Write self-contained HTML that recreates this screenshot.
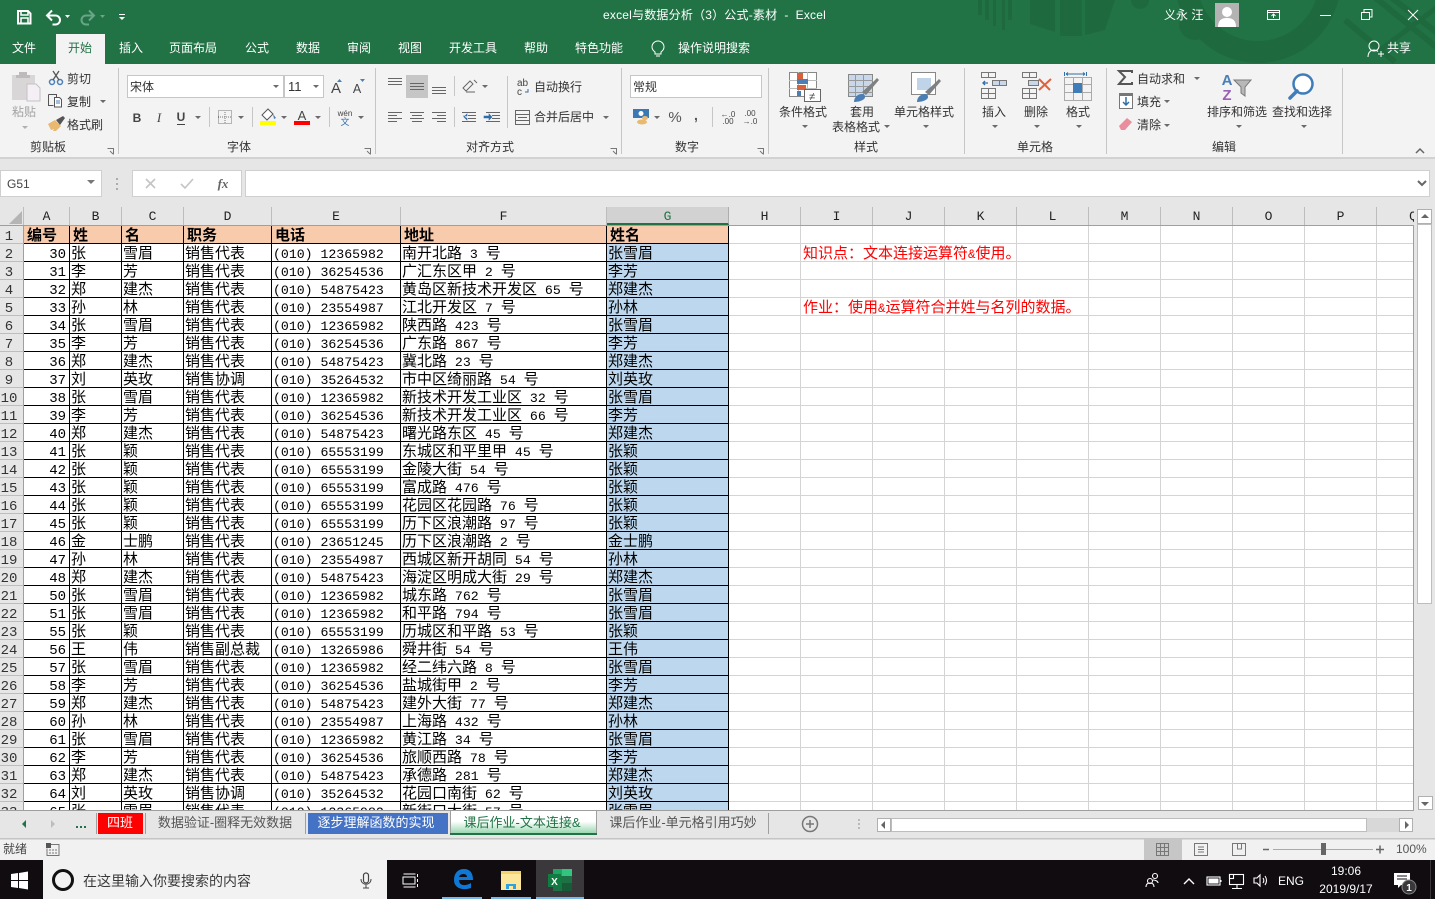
<!DOCTYPE html>
<html lang="zh"><head><meta charset="utf-8"><title>Excel</title>
<style>
html,body{margin:0;padding:0;width:1435px;height:899px;overflow:hidden;background:#e6e6e6}
svg.c{position:absolute;left:0;top:0}
svg.c text{font-family:"Liberation Sans","Noto Sans CJK SC",sans-serif;font-size:12px;fill:#333;white-space:pre}
svg.c .m{text-anchor:middle}
svg.c .w{fill:#fff}
#g{position:absolute;left:729px;top:226px;width:685px;height:584px;background-color:#fff;background-image:linear-gradient(to right,transparent 71px,#d4d4d4 71px),linear-gradient(to bottom,transparent 17px,#d4d4d4 17px);background-size:72px 18px;border-right:1px solid #9f9f9f;box-sizing:border-box}
#h{position:absolute;left:0;top:207px;width:1414px;height:19px;background:#e6e6e6;border-bottom:1px solid #9f9f9f;box-sizing:border-box;overflow:hidden}
#h b{position:absolute;top:0;height:18px;font:13px/20px "Liberation Mono",monospace;color:#222;text-align:center;border-right:1px solid #bdbdbd;box-sizing:border-box}
#h b.s{background:#d2d2d2;color:#217346;border-bottom:2px solid #217346;border-right:1px solid #adadad}
#tw{position:absolute;left:0;top:226px;width:729px;height:584px;overflow:hidden;background:#fff}
table{border-collapse:separate;border-spacing:0;table-layout:fixed;width:729px;font:15px/17px "WenQuanYi Zen Hei","Noto Sans CJK SC",sans-serif;color:#000}
tr{height:18px}
td,th{box-sizing:border-box;height:18px;padding:0 0 0 1px;white-space:pre;overflow:hidden;font-weight:normal;text-align:left;border-right:1px solid #000;border-bottom:1px solid #000;vertical-align:top}
th{background:#e6e6e6;border-right:1px solid #9f9f9f;border-bottom:1px solid #bdbdbd;text-align:center;font:14px/12px "Liberation Mono",monospace;color:#333;padding:5px 5px 0 0}
td:nth-child(2){text-align:right;padding:5px 3px 0 0;font:14px/12px "Liberation Mono",monospace}
i{font:normal 13.2px/0 "Liberation Mono",monospace}
tr.f td{background:#f8cbad;padding:0 0 0 3px;text-align:left;font:bold 15px/17px "WenQuanYi Zen Hei","Noto Sans CJK SC",sans-serif}
.n{position:absolute;left:803px;color:#f00;font:15px/18px "WenQuanYi Zen Hei","Noto Sans CJK SC",sans-serif;white-space:pre}
.n i{font-size:12.5px}
</style></head><body>
<svg class="c" width="1435" height="899" viewBox="0 0 1435 899">
<!-- title bar -->
<rect width="1435" height="64" fill="#217346"/>
<g fill="none" stroke="#1e6a3e">
<circle cx="1258" cy="-20" r="72" stroke-width="22"/>
<circle cx="1195" cy="24" r="11" stroke-width="10"/>
<path d="M1372 -5L1440 50M1388 -5L1440 35M1345 20L1395 62" stroke-width="6"/>
<path d="M1380 50L1440 5" stroke-width="5"/>
</g>
<g fill="#1e6a3e">
<rect x="978" width="4" height="15"/><rect x="985" width="4" height="20"/><rect x="993" width="3" height="26"/><rect x="1002" width="3" height="30"/><rect x="1008" width="4" height="20"/>
<path d="M1030 0h25v32l-25-8zM1060 0h22v36h-22zM1085 0h30l-10 30-20 5z"/>
<circle cx="1140" cy="0" r="9"/>
</g>
<!-- QAT -->
<g fill="none" stroke="#fff" stroke-width="2">
<path d="M18 11h10l2.500 2.500v10h-12.500z"/><path d="M21 11v4h7v-4M21 23v-5h7v5" stroke-width="1.500"/>
<path d="M47.500 15.500h8a4.500 4.500 0 0 1 0 9h-3"/><path d="M52 10.500l-5 5 5 5"/>
<g stroke="#6aa586"><path d="M94 15.500h-8a4.500 4.500 0 0 0 0 9h3"/><path d="M89 10.500l5 5-5 5"/></g>
</g>
<path d="M65 15h5l-2.500 3zM119 17h6l-3 3zM119 14h6v1h-6z" fill="#fff"/><path d="M100 15h5l-2.500 3z" fill="#6aa586"/>
<text x="603" y="19" class="w" style="font-size:12px;letter-spacing:.2px">excel与数据分析（3）公式-素材  -  Excel</text>
<text x="1164" y="19" class="w">义永 汪</text>
<rect x="1215" y="3" width="24" height="24" fill="#b3b3b3"/>
<circle cx="1227" cy="12" r="5" fill="#fff"/><path d="M1218 27c0-7 4-9 9-9s9 2 9 9z" fill="#fff"/>
<g fill="none" stroke="#fff" stroke-width="1">
<rect x="1267.500" y="10.500" width="12" height="9"/><path d="M1267 12.500h13M1273.500 18v-4M1271.500 16l2-2 2 2"/>
<path d="M1320 15.500h11"/>
<rect x="1361.500" y="12.500" width="8" height="7"/><path d="M1364 12v-2.500h8v7.500h-2"/>
<path d="M1408 10l10 10M1418 10l-10 10"/>
<circle cx="1374" cy="46" r="5"/><path d="M1368 57c0-5 3-7 6-7 1.500 0 3 .5 4 1.500M1378 54h6M1381 51v6"/>
</g>
<!-- tabs -->
<rect x="56" y="34" width="49" height="30" fill="#f3f3f3"/>
<g class="tabs">
<text x="24" y="52" class="m w">文件</text><text x="80" y="52" class="m" style="fill:#217346">开始</text><text x="131" y="52" class="m w">插入</text><text x="193" y="52" class="m w">页面布局</text><text x="257" y="52" class="m w">公式</text><text x="308" y="52" class="m w">数据</text><text x="359" y="52" class="m w">审阅</text><text x="410" y="52" class="m w">视图</text><text x="473" y="52" class="m w">开发工具</text><text x="536" y="52" class="m w">帮助</text><text x="599" y="52" class="m w">特色功能</text><text x="714" y="52" class="m w">操作说明搜索</text>
<text x="1399" y="52" class="m w">共享</text>
</g>
<path d="M655 52c-2-1.500-3-3-3-5a6 6 0 0 1 12 0c0 2-1 3.500-3 5v2h-6zM656 56h4" fill="none" stroke="#fff"/>
<!-- ribbon -->
<rect y="64" width="1435" height="94" fill="#f3f3f3"/>
<rect y="157" width="1435" height="2" fill="#d2d2d2"/>
<path d="M118.500 68v86M375.500 68v86M621.500 68v86M768.500 68v86M964.500 68v86M1106.500 68v86M1342.500 68v86" stroke="#c6c6c6"/>
<!-- clipboard -->
<path d="M12 75h23v25h-23z" fill="#d8d6d6"/><path d="M19 75v-3h8v3h3v3h-14v-3z" fill="#bdbbbb"/><path d="M27 84h9l4 4v13h-13z" fill="#f4eff4" stroke="#c4c2c2"/>
<text x="24" y="116" class="m" style="fill:#a3a3a3">粘贴</text>
<g fill="none" stroke="#4b7fb5" stroke-width="1.500"><circle cx="52" cy="82" r="2.500"/><circle cx="60" cy="82" r="2.500"/></g>
<path d="M53 80l6-9M59 80l-6-9" stroke="#555" stroke-width="1.300"/>
<text x="67" y="83">剪切</text>
<path d="M48.500 94.500h8v3M48.500 94.500v11h5" fill="none" stroke="#555"/><path d="M54.500 97.500h5l2 2v7.500h-7z" fill="#fff" stroke="#555"/><path d="M56 101h4M56 103h4" stroke="#4b7fb5"/>
<text x="67" y="106">复制</text>
<path d="M48 124l7-4 6 6-5 5h-3l1-2-3 1z" fill="#e8b96f"/><path d="M56 120l7-4 2 2-5 7z" fill="#555"/>
<text x="67" y="129">格式刷</text>
<text x="48" y="151" class="m">剪贴板</text><text x="239" y="151" class="m">字体</text><text x="490" y="151" class="m">对齐方式</text><text x="687" y="151" class="m">数字</text><text x="866" y="151" class="m">样式</text><text x="1035" y="151" class="m">单元格</text><text x="1224" y="151" class="m">编辑</text>
<path d="M107.500 148.500h6v6M110 151l3 3M364.500 148.500h6v6M367 151l3 3M610.500 148.500h6v6M613 151l3 3M757.500 148.500h6v6M760 151l3 3" fill="none" stroke="#777"/>
<!-- font -->
<rect x="127.500" y="75.500" width="156" height="22" fill="#fff" stroke="#c6c6c6"/><rect x="284.500" y="75.500" width="39" height="22" fill="#fff" stroke="#c6c6c6"/>
<text x="130" y="91">宋体</text><text x="288" y="91" style="font-size:13px">11</text>
<text x="336" y="93" class="m" style="font-size:15px;fill:#444">A</text><text x="357" y="93" class="m" style="font-size:12.500px;fill:#444">A</text>
<path d="M337 82l2.500-3 2.500 3zM360 79h5l-2.500 3z" fill="#4b7fb5"/>
<text x="137" y="122" class="m" style="font-weight:bold;font-size:12px;fill:#444">B</text><text x="159" y="122" class="m" style="font-style:italic;font-size:13px;fill:#444;font-family:'Liberation Serif',serif">I</text><text x="181" y="121" class="m" style="font-size:12px;font-weight:bold;fill:#444">U</text>
<path d="M177 124.500h8" stroke="#444"/>
<path d="M209.500 107v20M252.500 107v20M329.500 107v20M454.500 76v20M454.500 107v20M507.500 76v52M712.500 107v20" stroke="#c6c6c6"/>
<path d="M218.500 110.500h13v13h-13zM225 110v13M218 117h13" fill="none" stroke="#777" stroke-dasharray="1 1"/>
<path d="M268 109l-6 6 5 5 6-6z" fill="#fff" stroke="#555"/><path d="M273 114l3 4-2 1z" fill="#4b7fb5"/><rect x="260" y="121" width="16" height="4" fill="#ff0"/>
<text x="302" y="120" class="m" style="font-size:13px;fill:#444">A</text><rect x="294" y="121" width="16" height="4" fill="#f00"/>
<text x="345" y="116" class="m" style="font-size:8px;fill:#444">wén</text><text x="345" y="125" class="m" style="font-size:9px;fill:#2f6ea8">文</text>
<!-- carets -->
<path fill="#6a6a6a" d="M195 116h6l-3 3zM238 116h6l-3 3zM281 116h6l-3 3zM315 116h6l-3 3zM358 116h6l-3 3zM273 85h6l-3 3zM313 85h6l-3 3zM751 85h6l-3 3zM100 100h6l-3 3zM482 85h6l-3 3zM603 116h6l-3 3zM654 116h6l-3 3zM802 125h6l-3 3zM884 125h6l-3 3zM923 125h6l-3 3zM992 125h6l-3 3zM1034 125h6l-3 3zM1076 125h6l-3 3zM1194 77h6l-3 3zM1164 100h6l-3 3zM1164 124h6l-3 3zM1236 125h6l-3 3zM1301 125h6l-3 3z"/><path fill="#b0b0b0" d="M22 126h6l-3 3z"/>
<!-- align -->
<rect x="406" y="75" width="22" height="23" fill="#c6c6c6"/>
<path stroke="#666" fill="none" d="M388 78.500h14M388 81.500h14M388 84.500h14M410 83.500h14M410 86.500h14M410 89.500h14M432 87.500h14M432 90.500h14M432 93.500h14
M388 112.500h14M388 115.500h9M388 118.500h14M388 121.500h9M410 112.500h14M412 115.500h10M410 118.500h14M412 121.500h10M432 112.500h14M437 115.500h9M432 118.500h14M437 121.500h9
M462 112.500h14M468 115.500h8M468 118.500h8M462 121.500h14M486 112.500h14M492 115.500h8M492 118.500h8M486 121.500h14"/>
<path d="M463 116h4v-2l-3 3 3 3v-2M484 116h5v-2l3 3-3 3v-2h-5z" fill="#2f6ea8" stroke="#2f6ea8" stroke-width=".6"/>
<path d="M463 88l7-7 3 3-7 7zM466 92h9M474 80l3 3" fill="none" stroke="#666"/>
<text x="517" y="86" style="font-size:10px;fill:#444">ab</text><text x="517" y="95" style="font-size:10px;fill:#444">c</text><path d="M525 92h3v-3" fill="none" stroke="#2f6ea8"/>
<text x="534" y="91">自动换行</text>
<path d="M515.500 110.500h14v14h-14zM515 114.500h14M515 120.500h14" fill="none" stroke="#666"/><path d="M518 117.500h9" stroke="#2f6ea8"/>
<text x="534" y="121">合并后居中</text>
<!-- number -->
<rect x="630.500" y="75.500" width="131" height="22" fill="#fff" stroke="#c6c6c6"/><text x="633" y="91">常规</text>
<rect x="633" y="109" width="16" height="9" fill="#3b79b5"/><circle cx="641" cy="113.500" r="2.500" fill="#fff"/><ellipse cx="642" cy="122" rx="5" ry="2.500" fill="#e8b96f"/><ellipse cx="645" cy="118" rx="3" ry="2" fill="#e8b96f"/>
<text x="675" y="122" class="m" style="font-size:15px;fill:#555">%</text><text x="696" y="120" class="m" style="font-size:14px;font-weight:bold;fill:#555">,</text>
<text x="728" y="117" style="font-size:8px;fill:#444" class="m">←.0</text><text x="728" y="124" style="font-size:8px;fill:#444" class="m">.00</text>
<text x="750" y="116" style="font-size:8px;fill:#444" class="m">.00</text><text x="750" y="124" style="font-size:8px;fill:#444" class="m">→.0</text>
<!-- styles -->
<path d="M789.500 72.500h27v24h-27z" fill="#fff" stroke="#888"/><path d="M789 80.500h28M789 88.500h28M798.500 72v24M807.500 72v24" stroke="#bbb"/>
<rect x="797" y="73" width="6" height="6" fill="#d9603b"/><rect x="797" y="79" width="11" height="5" fill="#4a7eb5"/><rect x="797" y="85" width="9" height="5" fill="#d9603b"/><rect x="797" y="91" width="4" height="5" fill="#4a7eb5"/>
<rect x="804.500" y="89.500" width="16" height="12" fill="#fff" stroke="#666"/><text x="812" y="100" class="m" style="font-size:11px;fill:#444">≠</text>
<path d="M848.500 74.500h24v22h-24z" fill="#c8d8ea" stroke="#888"/><path d="M848 80.500h25M848 86.500h25M848 92.500h25M855.500 74v22M863.500 74v22" stroke="#999"/>
<path d="M862 92l10-9 5-5 2 2-6 7-7 8z" fill="#808080"/><path d="M854 102c0-5 4-8 8-8 2 0 3 1 3 3 0 3-6 5-11 5z" fill="#4a7eb5"/>
<path d="M911.500 72.500h24v22h-24z" fill="#fff" stroke="#888"/><rect x="917" y="78" width="14" height="12" fill="#bfd3e9"/>
<path d="M925 92l9-8 5-5 2 2-6 7-6 7z" fill="#808080"/><path d="M917 102c0-5 4-8 8-8 2 0 3 1 3 3 0 3-6 5-11 5z" fill="#4a7eb5"/>
<text x="803" y="116" class="m">条件格式</text><text x="862" y="116" class="m">套用</text><text x="856" y="131" class="m">表格格式</text><text x="924" y="116" class="m">单元格样式</text>
<!-- cells -->
<g fill="none" stroke="#777"><path d="M981.500 72.500h14v5h-14zM988.500 72v5M981.500 88.500h14v10h-14zM988.500 88v10M981 93.500h14"/><path d="M992.500 80.500h14v5h-14zM999.500 80v5" fill="#c8d8ea"/>
<path d="M1022.500 72.500h14v5h-14zM1029.500 72v5M1022.500 88.500h14v10h-14zM1029.500 88v10M1022 93.500h14"/><path d="M1028.500 80.500h10v5h-10z" fill="#c8d8ea"/>
<path d="M1064.500 77.500h27v23h-27zM1073.500 77v23M1082.500 77v23M1064 84.500h27M1064 92.500h27" stroke="#aaa"/></g>
<path d="M983 83h5M985 81l-2 2 2 2" fill="none" stroke="#2f6ea8" stroke-width="1.300"/>
<path d="M1039 79l11 11M1051 79l-12 11" stroke="#e0623c" stroke-width="2" fill="none"/>
<rect x="1073" y="83" width="9" height="10" fill="#3f7cba"/>
<path d="M1064.500 72v4M1086.500 72v4M1066 74h19M1066 74l2-1.500M1066 74l2 1.500M1085 74l-2-1.500M1085 74l-2 1.500" stroke="#2f6ea8" fill="none"/>
<text x="994" y="116" class="m">插入</text><text x="1036" y="116" class="m">删除</text><text x="1078" y="116" class="m">格式</text>
<!-- edit -->
<path d="M1132 73v-2h-13l6 6-6 7h13v-2" fill="none" stroke="#555" stroke-width="2"/>
<text x="1137" y="83">自动求和</text>
<rect x="1119.500" y="93.500" width="13" height="15" fill="#fff" stroke="#777"/><rect x="1119" y="93" width="14" height="3" fill="#777"/><path d="M1126 97v8M1123 102l3 3 3-3" fill="none" stroke="#2f6ea8" stroke-width="1.500"/>
<text x="1137" y="106">填充</text>
<path d="M1119 126l8-8 5 4-7 8h-4z" fill="#ea8d9c"/>
<text x="1137" y="129">清除</text>
<text x="1227" y="85" class="m" style="font-size:15px;font-weight:bold;fill:#4a7eb5">A</text><text x="1227" y="100" class="m" style="font-size:15px;font-weight:bold;fill:#9a60b5">Z</text>
<path d="M1234 80h17l-6 7v9l-4-3v-6z" fill="#b8b8b8" stroke="#7a7a7a"/>
<circle cx="1303" cy="84" r="9.500" fill="#fff" stroke="#3f7cba" stroke-width="2.500"/><path d="M1297 91l-7 7" stroke="#3f7cba" stroke-width="3.500" stroke-linecap="round"/>
<text x="1237" y="116" class="m">排序和筛选</text><text x="1302" y="116" class="m">查找和选择</text>
<path d="M1416 153l4-4 4 4" fill="none" stroke="#666" stroke-width="1.500"/>
<!-- formula bar -->
<rect x=".5" y="170.500" width="101" height="26" fill="#fff" stroke="#cfcfcf"/><text x="7" y="188" style="font-size:12px;fill:#444">G51</text>
<path d="M87 180h8l-4 4z" fill="#777"/>
<path d="M117 178v2M117 183v2M117 188v2" stroke="#999" stroke-width="1.500"/>
<rect x="132.500" y="170.500" width="109" height="26" fill="#fff" stroke="#cfcfcf"/><rect x="245.500" y="170.500" width="1184" height="26" fill="#fff" stroke="#cfcfcf"/>
<path d="M146 179l9 9M155 179l-9 9M181 184l4 4 8-9" fill="none" stroke="#c4c4c4" stroke-width="1.600"/>
<text x="223" y="188" class="m" style="font-family:'Liberation Serif',serif;font-style:italic;font-weight:bold;font-size:13px;fill:#666">fx</text>
<path d="M1418 181l4 4 4-4" fill="none" stroke="#666" stroke-width="2"/>
<!-- v scrollbar -->
<rect x="1414" y="207" width="21" height="603" fill="#e6e6e6"/>
<rect x="1417.500" y="209.500" width="14" height="14" fill="#fff" stroke="#b0b0b0"/><path d="M1421 218h8l-4-4z" fill="#666"/>
<rect x="1417.500" y="224.500" width="14" height="379" fill="#fff" stroke="#bdbdbd"/>
<rect x="1418.500" y="796.500" width="14" height="13" fill="#fff" stroke="#b0b0b0"/><path d="M1421 802h8l-4 4z" fill="#666"/>
<!-- tab strip -->
<rect y="810" width="1435" height="29" fill="#e6e6e6"/>
<path d="M0 810.500h1414" stroke="#9f9f9f"/><rect y="838" width="1435" height="1.500" fill="#c4c4c4"/>
<path d="M26 820v8l-4-4z" fill="#217346"/><path d="M51 820v8l4-4z" fill="#bdbdbd"/>
<path d="M76 826h2v2h-2zM80 826h2v2h-2zM84 826h2v2h-2z" fill="#217346"/>
<path d="M96.500 813v21M145.500 813v21M305.500 813v21M768.500 813v21" stroke="#9f9f9f"/>
<rect x="98" y="813" width="45" height="21" fill="#f00"/><text x="120" y="827" class="m w" style="font-size:13px">四班</text>
<text x="225" y="827" class="m" style="font-size:13px;fill:#555">数据验证-圈释无效数据</text>
<rect x="308" y="813" width="140" height="21" fill="#4472c4"/><text x="376" y="827" class="m w" style="font-size:13px">逐步理解函数的实现</text>
<defs><linearGradient id="tg" x1="0" y1="0" x2="0" y2="1"><stop offset="0" stop-color="#fff"/><stop offset=".45" stop-color="#fff"/><stop offset="1" stop-color="#8fd3a8"/></linearGradient></defs>
<rect x="450.500" y="810.500" width="146" height="24" fill="url(#tg)" stroke="#9f9f9f"/><rect x="450" y="833" width="147" height="2" fill="#217346"/>
<text x="522" y="827" class="m" style="font-size:13px;fill:#217346">课后作业-文本连接&amp;</text>
<text x="683" y="827" class="m" style="font-size:13px;fill:#555">课后作业-单元格引用巧妙</text>
<circle cx="810" cy="824" r="7.500" fill="none" stroke="#777" stroke-width="1.500"/><path d="M806 824h8M810 820v8" stroke="#777" stroke-width="1.500"/>
<path d="M859 819v2M859 823v2M859 827v2" stroke="#aaa" stroke-width="1.500"/>
<rect x="877.500" y="818.500" width="13" height="13" fill="#fff" stroke="#b0b0b0"/><path d="M885 821v8l-4-4z" fill="#666"/>
<rect x="891.500" y="818.500" width="475" height="13" fill="#fff" stroke="#bdbdbd"/><rect x="1367" y="818" width="32" height="14" fill="#d8d8d8"/>
<rect x="1399.500" y="818.500" width="13" height="13" fill="#fff" stroke="#b0b0b0"/><path d="M1405 821v8l4-4z" fill="#666"/>
<!-- status -->
<rect y="839.500" width="1435" height="21" fill="#f1f1f1"/>
<text x="3" y="853" style="font-size:12px;fill:#444">就绪</text>
<rect x="46" y="843" width="5" height="5" fill="#555"/><path d="M51 844.500h8v11h-12v-7" fill="none" stroke="#777"/><path d="M49 850h8M49 853h8" stroke="#777" stroke-dasharray="2 1"/>
<rect x="1144" y="839" width="38" height="21" fill="#c6c6c6"/>
<path d="M1156.500 843.500h12v12h-12zM1160.500 843v12M1164.500 843v12M1156 847.500h12M1156 851.500h12" fill="none" stroke="#777"/>
<path d="M1194.500 843.500h13v12h-13zM1198 847h6M1198 849.500h6M1198 852h6" fill="none" stroke="#777"/>
<path d="M1232.500 843.500h13v12h-13zM1237.500 843v6h4v-6" fill="none" stroke="#777"/>
<path d="M1263 849.500h6M1376 849.500h8M1380 845.500v8" stroke="#666" stroke-width="1.500"/>
<path d="M1273 849.500h100" stroke="#aaa"/><rect x="1321" y="843" width="5" height="12" fill="#666"/>
<text x="1396" y="853" style="font-size:12px;fill:#555">100%</text>
<!-- taskbar -->
<rect y="860" width="1435" height="39" fill="#100c10"/>
<path d="M11 874l7-1v7h-7zM19 873l9-1.500v8.500h-9zM11 881h7v7l-7-1zM19 881h9v8.500l-9-1.500z" fill="#fff"/>
<rect x="43" y="860" width="344" height="39" fill="#f2f2f2"/>
<circle cx="63" cy="880" r="9.500" fill="none" stroke="#111" stroke-width="3"/>
<text x="83" y="886" style="font-size:14px;fill:#3a3a3a">在这里输入你要搜索的内容</text>
<rect x="363.500" y="873" width="5" height="10" rx="2.500" fill="none" stroke="#444" stroke-width="1.200"/><path d="M361 879c0 7 10 7 10 0M366 885v3M363 888h6" fill="none" stroke="#444"/>
<path d="M403.500 874h12M403.500 887h12M403 877v7h12v-7z" fill="none" stroke="#fff"/><path d="M417.500 874v3M417.500 879v3M417.500 884v3" stroke="#fff"/>
<path d="M454 880c0-7 4-11 10-11 6 0 9 4 9 11h-14c0 5 5 7 12 3v5c-9 3-17 0-17-8zm5-3h8c0-4-7-4-8 0z" fill="#0f78d4"/>
<rect x="442" y="897" width="40" height="2" fill="#76b9ed"/>
<path d="M501 871h20v18h-20z" fill="#f4d36c"/><path d="M501 874h20v16h-20z" fill="#fde79a"/><path d="M506 889v-5h10v5h-3v-3h-4v3z" fill="#2ea3e3"/>
<rect x="491" y="897" width="40" height="2" fill="#76b9ed"/>
<rect x="536" y="860" width="48" height="39" fill="#3a383a"/><rect x="536" y="897" width="48" height="2" fill="#76b9ed"/>
<rect x="553" y="869" width="19" height="22" fill="#1e7145"/><rect x="562" y="869" width="10" height="7" fill="#33c481"/><rect x="553" y="869" width="9" height="7" fill="#21a366"/><rect x="562" y="883" width="10" height="8" fill="#185c37"/>
<rect x="548" y="874" width="13" height="13" fill="#107c41"/><text x="554.500" y="885" class="m w" style="font-size:10px;font-weight:bold">X</text>
<!-- tray -->
<g fill="none" stroke="#fff" stroke-width="1.100">
<circle cx="1155" cy="876" r="2.500"/><circle cx="1150" cy="881" r="2.500"/><path d="M1146 887c0-3 2-4 4-4s4 1 4 4M1153 880c2 0 5 1 5 3"/>
<path d="M1184 884l5-5 5 5" stroke-width="1.400"/>
<rect x="1207" y="877" width="13" height="8"/><rect x="1209" y="879" width="9" height="4" fill="#fff"/><path d="M1221 880v2"/>
<rect x="1229.500" y="874.500" width="14" height="10"/><rect x="1229.500" y="874.500" width="4" height="4" fill="#100c10"/><path d="M1237 885v3M1232 888.500h10"/>
<path d="M1254 878h3l3-3v11l-3-3h-3zM1263 878c1 1.500 1 3.500 0 5M1265 876c2 3 2 6 0 9" />
</g>
<text x="1291" y="885" class="m w" style="font-size:12px">ENG</text>
<text x="1346" y="875" class="m w" style="font-size:12px">19:06</text><text x="1346" y="893" class="m w" style="font-size:12px">2019/9/17</text>
<path d="M1394 873h16v12h-9l-3 3v-3h-4z" fill="#fff"/><path d="M1397 876h10M1397 879h10" stroke="#100c10"/>
<circle cx="1409" cy="887" r="7" fill="#3a383a" stroke="#888"/><text x="1409" y="891" class="m w" style="font-size:10px;font-weight:bold">1</text>
<path d="M1430.500 860v39" stroke="#3a383a"/>
</svg>

<div id="h">
<b style="left:0;width:24px"></b>
<b style="left:24px;width:46px">A</b><b style="left:70px;width:52px">B</b><b style="left:122px;width:62px">C</b><b style="left:184px;width:88px">D</b><b style="left:272px;width:129px">E</b><b style="left:401px;width:206px">F</b><b class="s" style="left:607px;width:122px">G</b><b style="left:729px;width:72px">H</b><b style="left:801px;width:72px">I</b><b style="left:873px;width:72px">J</b><b style="left:945px;width:72px">K</b><b style="left:1017px;width:72px">L</b><b style="left:1089px;width:72px">M</b><b style="left:1161px;width:72px">N</b><b style="left:1233px;width:72px">O</b><b style="left:1305px;width:72px">P</b><b style="left:1377px;width:72px;border:0">Q</b>
</div>
<svg class="c" width="24" height="19" style="top:207px"><path d="M22 4v13h-13z" fill="#b5b5b5"/></svg>
<div id="g"></div>
<div id="tw"><table>
<colgroup><col style="width:24px"><col style="width:46px"><col style="width:52px"><col style="width:62px"><col style="width:88px"><col style="width:129px"><col style="width:206px"><col style="width:122px;background:#bdd7ee"></colgroup>
<tr class="f"><th>1</th><td>编号</td><td>姓</td><td>名</td><td>职务</td><td>电话</td><td>地址</td><td>姓名</td></tr>
<tr><th>2</th><td>30</td><td>张</td><td>雪眉</td><td>销售代表</td><td><i>(010) 12365982</i></td><td>南开北路<i> 3 </i>号</td><td>张雪眉</td></tr>
<tr><th>3</th><td>31</td><td>李</td><td>芳</td><td>销售代表</td><td><i>(010) 36254536</i></td><td>广汇东区甲<i> 2 </i>号</td><td>李芳</td></tr>
<tr><th>4</th><td>32</td><td>郑</td><td>建杰</td><td>销售代表</td><td><i>(010) 54875423</i></td><td>黄岛区新技术开发区<i> 65 </i>号</td><td>郑建杰</td></tr>
<tr><th>5</th><td>33</td><td>孙</td><td>林</td><td>销售代表</td><td><i>(010) 23554987</i></td><td>江北开发区<i> 7 </i>号</td><td>孙林</td></tr>
<tr><th>6</th><td>34</td><td>张</td><td>雪眉</td><td>销售代表</td><td><i>(010) 12365982</i></td><td>陕西路<i> 423 </i>号</td><td>张雪眉</td></tr>
<tr><th>7</th><td>35</td><td>李</td><td>芳</td><td>销售代表</td><td><i>(010) 36254536</i></td><td>广东路<i> 867 </i>号</td><td>李芳</td></tr>
<tr><th>8</th><td>36</td><td>郑</td><td>建杰</td><td>销售代表</td><td><i>(010) 54875423</i></td><td>冀北路<i> 23 </i>号</td><td>郑建杰</td></tr>
<tr><th>9</th><td>37</td><td>刘</td><td>英玫</td><td>销售协调</td><td><i>(010) 35264532</i></td><td>市中区绮丽路<i> 54 </i>号</td><td>刘英玫</td></tr>
<tr><th>10</th><td>38</td><td>张</td><td>雪眉</td><td>销售代表</td><td><i>(010) 12365982</i></td><td>新技术开发工业区<i> 32 </i>号</td><td>张雪眉</td></tr>
<tr><th>11</th><td>39</td><td>李</td><td>芳</td><td>销售代表</td><td><i>(010) 36254536</i></td><td>新技术开发工业区<i> 66 </i>号</td><td>李芳</td></tr>
<tr><th>12</th><td>40</td><td>郑</td><td>建杰</td><td>销售代表</td><td><i>(010) 54875423</i></td><td>曙光路东区<i> 45 </i>号</td><td>郑建杰</td></tr>
<tr><th>13</th><td>41</td><td>张</td><td>颖</td><td>销售代表</td><td><i>(010) 65553199</i></td><td>东城区和平里甲<i> 45 </i>号</td><td>张颖</td></tr>
<tr><th>14</th><td>42</td><td>张</td><td>颖</td><td>销售代表</td><td><i>(010) 65553199</i></td><td>金陵大街<i> 54 </i>号</td><td>张颖</td></tr>
<tr><th>15</th><td>43</td><td>张</td><td>颖</td><td>销售代表</td><td><i>(010) 65553199</i></td><td>富成路<i> 476 </i>号</td><td>张颖</td></tr>
<tr><th>16</th><td>44</td><td>张</td><td>颖</td><td>销售代表</td><td><i>(010) 65553199</i></td><td>花园区花园路<i> 76 </i>号</td><td>张颖</td></tr>
<tr><th>17</th><td>45</td><td>张</td><td>颖</td><td>销售代表</td><td><i>(010) 65553199</i></td><td>历下区浪潮路<i> 97 </i>号</td><td>张颖</td></tr>
<tr><th>18</th><td>46</td><td>金</td><td>士鹏</td><td>销售代表</td><td><i>(010) 23651245</i></td><td>历下区浪潮路<i> 2 </i>号</td><td>金士鹏</td></tr>
<tr><th>19</th><td>47</td><td>孙</td><td>林</td><td>销售代表</td><td><i>(010) 23554987</i></td><td>西城区新开胡同<i> 54 </i>号</td><td>孙林</td></tr>
<tr><th>20</th><td>48</td><td>郑</td><td>建杰</td><td>销售代表</td><td><i>(010) 54875423</i></td><td>海淀区明成大街<i> 29 </i>号</td><td>郑建杰</td></tr>
<tr><th>21</th><td>50</td><td>张</td><td>雪眉</td><td>销售代表</td><td><i>(010) 12365982</i></td><td>城东路<i> 762 </i>号</td><td>张雪眉</td></tr>
<tr><th>22</th><td>51</td><td>张</td><td>雪眉</td><td>销售代表</td><td><i>(010) 12365982</i></td><td>和平路<i> 794 </i>号</td><td>张雪眉</td></tr>
<tr><th>23</th><td>55</td><td>张</td><td>颖</td><td>销售代表</td><td><i>(010) 65553199</i></td><td>历城区和平路<i> 53 </i>号</td><td>张颖</td></tr>
<tr><th>24</th><td>56</td><td>王</td><td>伟</td><td>销售副总裁</td><td><i>(010) 13265986</i></td><td>舜井街<i> 54 </i>号</td><td>王伟</td></tr>
<tr><th>25</th><td>57</td><td>张</td><td>雪眉</td><td>销售代表</td><td><i>(010) 12365982</i></td><td>经二纬六路<i> 8 </i>号</td><td>张雪眉</td></tr>
<tr><th>26</th><td>58</td><td>李</td><td>芳</td><td>销售代表</td><td><i>(010) 36254536</i></td><td>盐城街甲<i> 2 </i>号</td><td>李芳</td></tr>
<tr><th>27</th><td>59</td><td>郑</td><td>建杰</td><td>销售代表</td><td><i>(010) 54875423</i></td><td>建外大街<i> 77 </i>号</td><td>郑建杰</td></tr>
<tr><th>28</th><td>60</td><td>孙</td><td>林</td><td>销售代表</td><td><i>(010) 23554987</i></td><td>上海路<i> 432 </i>号</td><td>孙林</td></tr>
<tr><th>29</th><td>61</td><td>张</td><td>雪眉</td><td>销售代表</td><td><i>(010) 12365982</i></td><td>黄江路<i> 34 </i>号</td><td>张雪眉</td></tr>
<tr><th>30</th><td>62</td><td>李</td><td>芳</td><td>销售代表</td><td><i>(010) 36254536</i></td><td>旅顺西路<i> 78 </i>号</td><td>李芳</td></tr>
<tr><th>31</th><td>63</td><td>郑</td><td>建杰</td><td>销售代表</td><td><i>(010) 54875423</i></td><td>承德路<i> 281 </i>号</td><td>郑建杰</td></tr>
<tr><th>32</th><td>64</td><td>刘</td><td>英玫</td><td>销售协调</td><td><i>(010) 35264532</i></td><td>花园口南街<i> 62 </i>号</td><td>刘英玫</td></tr>
<tr><th>33</th><td>65</td><td>张</td><td>雪眉</td><td>销售代表</td><td><i>(010) 12365982</i></td><td>新街口大街<i> 57 </i>号</td><td>张雪眉</td></tr>
</table></div>
<div class="n" style="top:244px">知识点：文本连接运算符<i>&amp;</i>使用。</div>
<div class="n" style="top:298px">作业：使用<i>&amp;</i>运算符合并姓与名列的数据。</div>
</body></html>
